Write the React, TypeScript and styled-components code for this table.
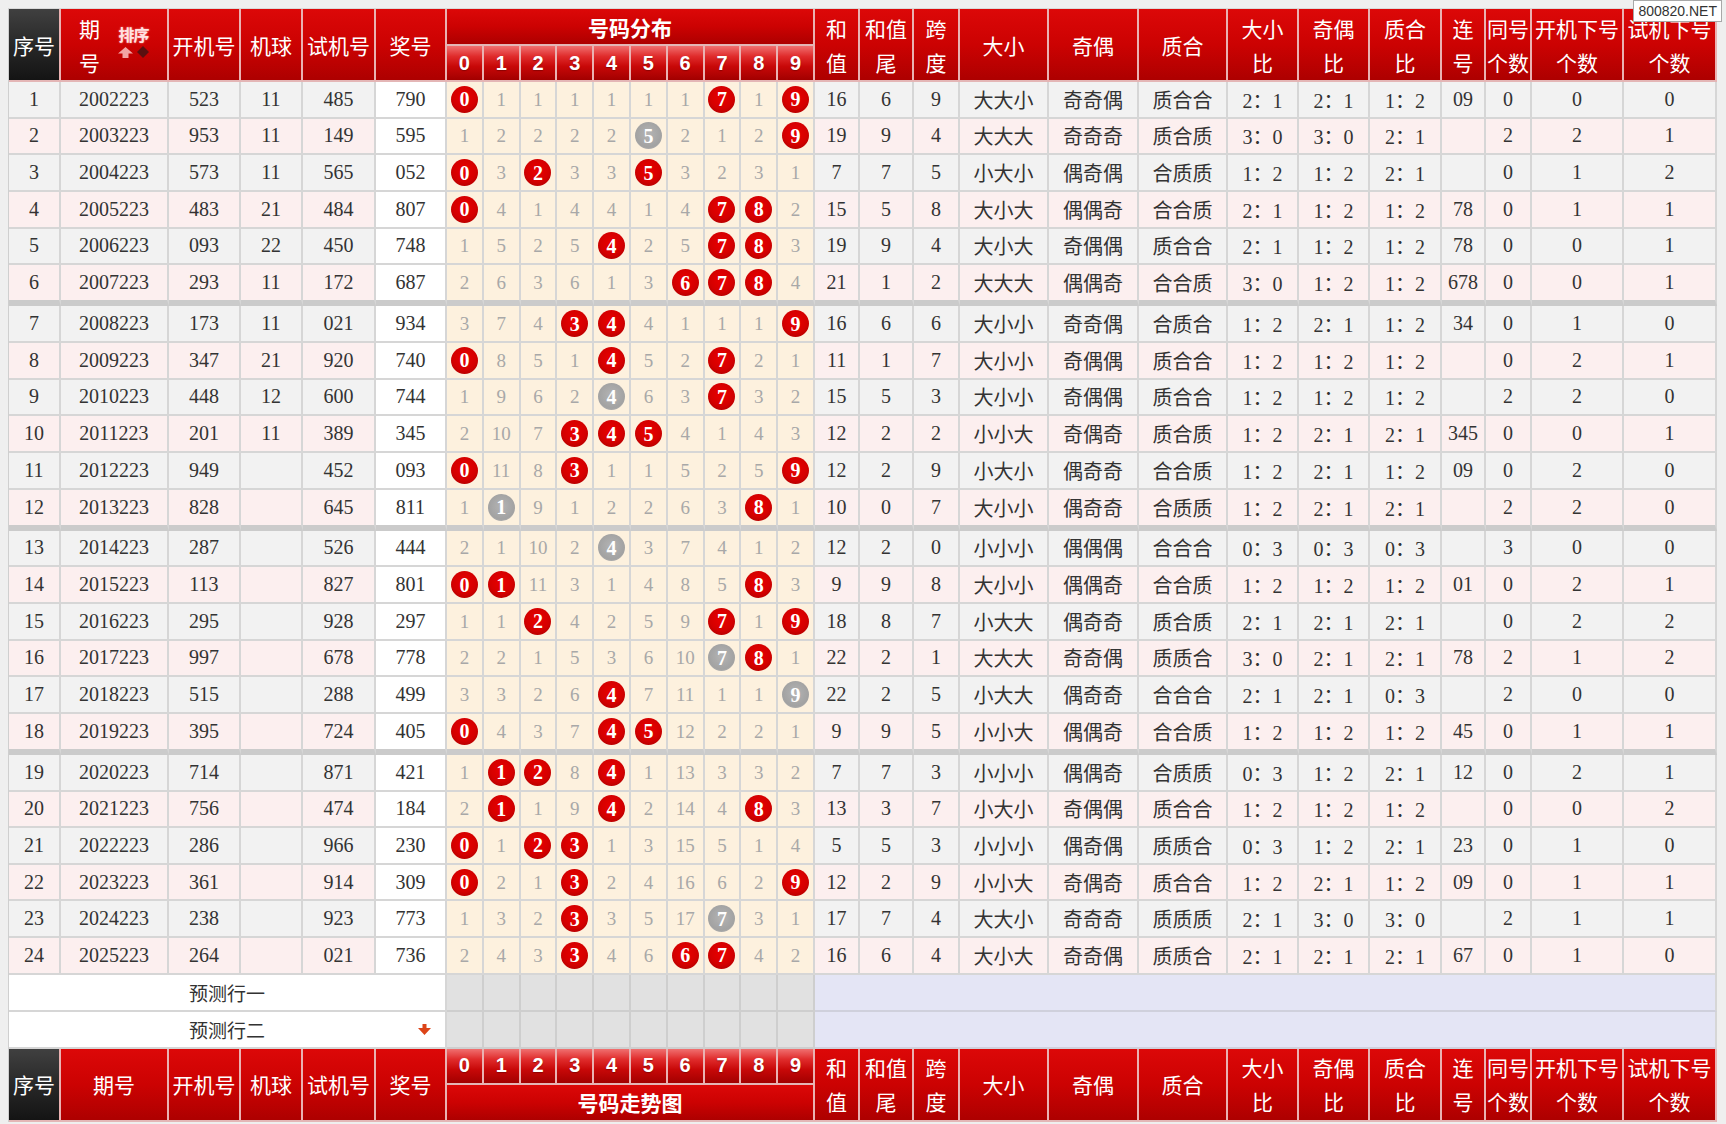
import React from "react";
import styled, { createGlobalStyle, css } from "styled-components";

interface DrawRow {
    no: string;
    issue: string;
    kj: string;
    jq: string;
    sj: string;
    jh: string;
    miss: string[];
    rest: string[];
}

// 序号|期号|开机号|机球|试机号|奖号|遗漏|和值|和值尾|跨度|大小|奇偶|质合|大小比|奇偶比|质合比|连号|同号|开机下号|试机下号
const RAW = `
1|2002223|523|11|485|790|0,1,1,1,1,1,1,0,1,0|16|6|9|大大小|奇奇偶|质合合|2：1|2：1|1：2|09|0|0|0
2|2003223|953|11|149|595|1,2,2,2,2,0,2,1,2,0|19|9|4|大大大|奇奇奇|质合质|3：0|3：0|2：1||2|2|1
3|2004223|573|11|565|052|0,3,0,3,3,0,3,2,3,1|7|7|5|小大小|偶奇偶|合质质|1：2|1：2|2：1||0|1|2
4|2005223|483|21|484|807|0,4,1,4,4,1,4,0,0,2|15|5|8|大小大|偶偶奇|合合质|2：1|1：2|1：2|78|0|1|1
5|2006223|093|22|450|748|1,5,2,5,0,2,5,0,0,3|19|9|4|大小大|奇偶偶|质合合|2：1|1：2|1：2|78|0|0|1
6|2007223|293|11|172|687|2,6,3,6,1,3,0,0,0,4|21|1|2|大大大|偶偶奇|合合质|3：0|1：2|1：2|678|0|0|1
7|2008223|173|11|021|934|3,7,4,0,0,4,1,1,1,0|16|6|6|大小小|奇奇偶|合质合|1：2|2：1|1：2|34|0|1|0
8|2009223|347|21|920|740|0,8,5,1,0,5,2,0,2,1|11|1|7|大小小|奇偶偶|质合合|1：2|1：2|1：2||0|2|1
9|2010223|448|12|600|744|1,9,6,2,0,6,3,0,3,2|15|5|3|大小小|奇偶偶|质合合|1：2|1：2|1：2||2|2|0
10|2011223|201|11|389|345|2,10,7,0,0,0,4,1,4,3|12|2|2|小小大|奇偶奇|质合质|1：2|2：1|2：1|345|0|0|1
11|2012223|949||452|093|0,11,8,0,1,1,5,2,5,0|12|2|9|小大小|偶奇奇|合合质|1：2|2：1|1：2|09|0|2|0
12|2013223|828||645|811|1,0,9,1,2,2,6,3,0,1|10|0|7|大小小|偶奇奇|合质质|1：2|2：1|2：1||2|2|0
13|2014223|287||526|444|2,1,10,2,0,3,7,4,1,2|12|2|0|小小小|偶偶偶|合合合|0：3|0：3|0：3||3|0|0
14|2015223|113||827|801|0,0,11,3,1,4,8,5,0,3|9|9|8|大小小|偶偶奇|合合质|1：2|1：2|1：2|01|0|2|1
15|2016223|295||928|297|1,1,0,4,2,5,9,0,1,0|18|8|7|小大大|偶奇奇|质合质|2：1|2：1|2：1||0|2|2
16|2017223|997||678|778|2,2,1,5,3,6,10,0,0,1|22|2|1|大大大|奇奇偶|质质合|3：0|2：1|2：1|78|2|1|2
17|2018223|515||288|499|3,3,2,6,0,7,11,1,1,0|22|2|5|小大大|偶奇奇|合合合|2：1|2：1|0：3||2|0|0
18|2019223|395||724|405|0,4,3,7,0,0,12,2,2,1|9|9|5|小小大|偶偶奇|合合质|1：2|1：2|1：2|45|0|1|1
19|2020223|714||871|421|1,0,0,8,0,1,13,3,3,2|7|7|3|小小小|偶偶奇|合质质|0：3|1：2|2：1|12|0|2|1
20|2021223|756||474|184|2,0,1,9,0,2,14,4,0,3|13|3|7|小大小|奇偶偶|质合合|1：2|1：2|1：2||0|0|2
21|2022223|286||966|230|0,1,0,0,1,3,15,5,1,4|5|5|3|小小小|偶奇偶|质质合|0：3|1：2|2：1|23|0|1|0
22|2023223|361||914|309|0,2,1,0,2,4,16,6,2,0|12|2|9|小小大|奇偶奇|质合合|1：2|2：1|1：2|09|0|1|1
23|2024223|238||923|773|1,3,2,0,3,5,17,0,3,1|17|7|4|大大小|奇奇奇|质质质|2：1|3：0|3：0||2|1|1
24|2025223|264||021|736|2,4,3,0,4,6,0,0,4,2|16|6|4|大小大|奇奇偶|质质合|2：1|2：1|2：1|67|0|1|0
`;

const rows: DrawRow[] = RAW.trim()
    .split("\n")
    .map((line) => {
        const f = line.trim().split("|");
        return {
            no: f[0],
            issue: f[1],
            kj: f[2],
            jq: f[3],
            sj: f[4],
            jh: f[5],
            miss: f[6].split(","),
            rest: f.slice(7)
        };
    });

const DIGITS = [0, 1, 2, 3, 4, 5, 6, 7, 8, 9];
const COL_WIDTHS = [
    52, 108, 72, 62, 73, 71,
    36.8, 36.8, 36.8, 36.8, 36.8, 36.8, 36.8, 36.8, 36.8, 36.8,
    45, 54, 46, 89, 90, 89, 71, 71, 72, 44, 46, 92, 93
];

// 右侧表头（和值 .. 试机下号个数），两行文字
const RIGHT_HEADS: string[][] = [
    ["和", "值"],
    ["和值", "尾"],
    ["跨", "度"],
    ["大小"],
    ["奇偶"],
    ["质合"],
    ["大小", "比"],
    ["奇偶", "比"],
    ["质合", "比"],
    ["连", "号"],
    ["同号", "个数"],
    ["开机下号", "个数"],
    ["试机下号", "个数"]
];

const LEFT_HEADS = ["开机号", "机球", "试机号", "奖号"];

/* ---- Global ---- */
const GlobalStyle = createGlobalStyle`
    body {
        margin: 8px;
        background: #efefef;
        font-family: "Liberation Serif", "Noto Sans CJK SC", serif;
    }
`;

/* ---- Table ---- */
const Table = styled.table`
    border-collapse: separate;
    border-spacing: 0;
    table-layout: fixed;
    width: 1709px;
    border-left: 1px solid #cfcfcf;
    border-top: 1px solid #d9d9d9;
`;

const Row = styled.tr<{ $h: number }>`
    height: ${({ $h }) => $h}px;
`;

const redGrad = css`
    background: linear-gradient(to bottom, #dc0808 0%, #cc0202 50%, #ad0000 100%);
`;

const HeadCell = styled.th<{ $dark?: boolean; $bold?: boolean }>`
    ${redGrad};
    ${({ $dark }) =>
        $dark &&
        css`
            background: linear-gradient(to bottom, #404040 0%, #262626 55%, #141414 100%);
        `}
    padding: 0;
    border-right: 2px solid #eab2b2;
    border-bottom: 2px solid #e4b6b6;
    color: #fff;
    font-family: "Noto Sans CJK SC", sans-serif;
    font-size: 21px;
    font-weight: ${({ $bold }) => ($bold ? 700 : 400)};
    line-height: 34px;
    text-align: center;
    vertical-align: middle;
    white-space: nowrap;
    overflow: hidden;
`;

const DigitHead = styled.th`
    background: linear-gradient(to bottom, #f07070 0%, #e02c2c 30%, #c80808 60%, #a20000 100%);
    padding: 0;
    border-right: 2px solid #eab2b2;
    border-bottom: 2px solid #e4b6b6;
    color: #fff;
    font-family: "Liberation Sans", Arial, sans-serif;
    font-size: 20px;
    font-weight: 700;
    text-align: center;
    vertical-align: middle;
    text-shadow: 0 1px 1px rgba(90, 0, 0, 0.5);
`;

/* ---- 期号 header with sort ---- */
const IssueHead = styled.div`
    display: flex;
    align-items: center;
    justify-content: center;
    gap: 18px;
`;

const SortBox = styled.div`
    display: flex;
    flex-direction: column;
    align-items: center;
    gap: 3px;
    margin-top: -6px;
`;

const SortText = styled.span`
    font-size: 16px;
    font-weight: 700;
    line-height: 18px;
    letter-spacing: -1px;
    color: #ffe2e2;
    text-shadow: 0 0 2px #ff9a9a;
`;

const SortIcons = styled.div`
    display: flex;
    align-items: center;
    gap: 4px;
    line-height: 0;
`;

/* ---- Body cells ---- */
const toneBg = {
    gray: "#f2f2f2",
    pink: "#fcefef",
    cream: "#fdf1de",
    white: "#ffffff"
};

const Cell = styled.td<{ $tone: keyof typeof toneBg; $sep?: boolean }>`
    background: ${({ $tone }) => toneBg[$tone]};
    padding: 0;
    border-right: 2px solid #d6d6d6;
    border-bottom: ${({ $sep }) => ($sep ? "6px solid #cbcbcb" : "2px solid #d6d6d6")};
    color: #333;
    font-size: 20px;
    text-align: center;
    vertical-align: middle;
    white-space: nowrap;
    overflow: hidden;
`;

const Ball = styled.span<{ $gray?: boolean }>`
    display: inline-flex;
    align-items: center;
    justify-content: center;
    width: 27px;
    height: 27px;
    border-radius: 50%;
    background: ${({ $gray }) =>
        $gray
            ? "radial-gradient(circle at 50% 45%, #b4b4b4 0%, #a2a2a2 65%, #c4c4c4 100%)"
            : "radial-gradient(circle at 50% 42%, #ea0000 0%, #d40000 55%, #b00000 85%, #c83030 100%)"};
    color: #fff;
    font-family: "Liberation Serif", serif;
    font-size: 20px;
    font-weight: 700;
    line-height: 1;
    vertical-align: middle;
`;

const Miss = styled.span`
    color: #a8a8a8;
    font-size: 19px;
`;

/* ---- 预测行 ---- */
const PredCell = styled.td`
    background: #fff;
    padding: 0 14px 0 0;
    border-right: 2px solid #d6d6d6;
    border-bottom: 2px solid #d6d6d6;
    vertical-align: middle;
`;

const PredInner = styled.div`
    display: grid;
    grid-template-columns: 1fr auto 1fr;
    align-items: center;
    padding-left: 14px;
    color: #333;
    font-family: "Noto Sans CJK SC", sans-serif;
    font-size: 19px;
`;

const PredArrow = styled.span`
    justify-self: end;
    display: flex;
`;

const PredDigit = styled.td`
    background: #e1e1e1;
    padding: 0;
    border-right: 2px solid #cecece;
    border-bottom: 2px solid #cecece;
`;

const PredRest = styled.td`
    background: #e4e5f5;
    padding: 0;
    border-right: 2px solid #d6d6d6;
    border-bottom: 2px solid #cfd0dc;
`;

/* ---- Watermark ---- */
const Watermark = styled.div`
    position: fixed;
    top: 0;
    right: 4px;
    padding: 1px 4px;
    background: #fff;
    border: 1px solid #a8a8a8;
    color: #333;
    font-family: "Liberation Sans", Arial, sans-serif;
    font-size: 14px;
    line-height: 18px;
`;

const SortUp = () => (
    <svg width="15" height="11" viewBox="0 0 15 11">
        <path d="M7.5 0 L15 6.5 H10.5 V11 H4.5 V6.5 H0 Z" fill="#f2a4a4" />
    </svg>
);

const SortDiamond = () => (
    <svg width="12" height="12" viewBox="0 0 12 12">
        <path d="M6 0 L12 6 L6 12 L0 6 Z" fill="#5a1010" />
    </svg>
);

const DownArrow = () => (
    <svg width="13" height="11" viewBox="0 0 13 11">
        <path d="M4.5 0 H8.5 V4 H13 L6.5 11 L0 4 H4.5 Z" fill="#dc4418" />
    </svg>
);

const Lines: React.FC<{ parts: string[] }> = ({ parts }) => (
    <>
        {parts.map((p, i) => (
            <React.Fragment key={i}>
                {i > 0 && <br />}
                {p}
            </React.Fragment>
        ))}
    </>
);

const DigitCell: React.FC<{ row: DrawRow; d: number; sep: boolean }> = ({ row, d, sep }) => {
    const count = row.jh.split("").filter((c) => c === String(d)).length;
    return (
        <Cell $tone="cream" $sep={sep}>
            {count >= 2 ? <Ball $gray>{d}</Ball> : count === 1 ? <Ball>{d}</Ball> : <Miss>{row.miss[d]}</Miss>}
        </Cell>
    );
};

const DataRow: React.FC<{ row: DrawRow; index: number }> = ({ row, index }) => {
    const tone = index % 2 === 0 ? "gray" : "pink";
    const sep = index === 5 || index === 11 || index === 17;
    return (
        <Row $h={sep ? 41 : 36.67}>
            <Cell $tone={tone} $sep={sep}>{row.no}</Cell>
            <Cell $tone={tone} $sep={sep}>{row.issue}</Cell>
            <Cell $tone={tone} $sep={sep}>{row.kj}</Cell>
            <Cell $tone={tone} $sep={sep}>{row.jq}</Cell>
            <Cell $tone={tone} $sep={sep}>{row.sj}</Cell>
            <Cell $tone="white" $sep={sep}>{row.jh}</Cell>
            {DIGITS.map((d) => (
                <DigitCell key={d} row={row} d={d} sep={sep} />
            ))}
            {row.rest.map((v, i) => (
                <Cell key={i} $tone={tone} $sep={sep}>{v}</Cell>
            ))}
        </Row>
    );
};

const PredRow: React.FC<{ label: string; arrow?: boolean }> = ({ label, arrow }) => (
    <Row $h={37}>
        <PredCell colSpan={6}>
            <PredInner>
                <span />
                <span>{label}</span>
                <PredArrow>{arrow && <DownArrow />}</PredArrow>
            </PredInner>
        </PredCell>
        {DIGITS.map((d) => (
            <PredDigit key={d} />
        ))}
        <PredRest colSpan={13} />
    </Row>
);

export default function App() {
    return (
        <>
            <GlobalStyle />
            <Table>
                <colgroup>
                    {COL_WIDTHS.map((w, i) => (
                        <col key={i} style={{ width: w }} />
                    ))}
                </colgroup>
                <thead>
                    <Row $h={37}>
                        <HeadCell rowSpan={2} $dark>序号</HeadCell>
                        <HeadCell rowSpan={2}>
                            <IssueHead>
                                <span>
                                    期<br />号
                                </span>
                                <SortBox>
                                    <SortText>排序</SortText>
                                    <SortIcons>
                                        <SortUp />
                                        <SortDiamond />
                                    </SortIcons>
                                </SortBox>
                            </IssueHead>
                        </HeadCell>
                        {LEFT_HEADS.map((h) => (
                            <HeadCell key={h} rowSpan={2}>{h}</HeadCell>
                        ))}
                        <HeadCell colSpan={10} $bold>号码分布</HeadCell>
                        {RIGHT_HEADS.map((h, i) => (
                            <HeadCell key={i} rowSpan={2}>
                                <Lines parts={h} />
                            </HeadCell>
                        ))}
                    </Row>
                    <Row $h={36}>
                        {DIGITS.map((d) => (
                            <DigitHead key={d}>{d}</DigitHead>
                        ))}
                    </Row>
                </thead>
                <tbody>
                    {rows.map((r, i) => (
                        <DataRow key={r.no} row={r} index={i} />
                    ))}
                    <PredRow label="预测行一" />
                    <PredRow label="预测行二" arrow />
                </tbody>
                <tfoot>
                    <Row $h={36}>
                        <HeadCell rowSpan={2} $dark>序号</HeadCell>
                        <HeadCell rowSpan={2}>期号</HeadCell>
                        {LEFT_HEADS.map((h) => (
                            <HeadCell key={h} rowSpan={2}>{h}</HeadCell>
                        ))}
                        {DIGITS.map((d) => (
                            <DigitHead key={d}>{d}</DigitHead>
                        ))}
                        {RIGHT_HEADS.map((h, i) => (
                            <HeadCell key={i} rowSpan={2}>
                                <Lines parts={h} />
                            </HeadCell>
                        ))}
                    </Row>
                    <Row $h={37}>
                        <HeadCell colSpan={10} $bold>号码走势图</HeadCell>
                    </Row>
                </tfoot>
            </Table>
            <Watermark>800820.NET</Watermark>
        </>
    );
}
